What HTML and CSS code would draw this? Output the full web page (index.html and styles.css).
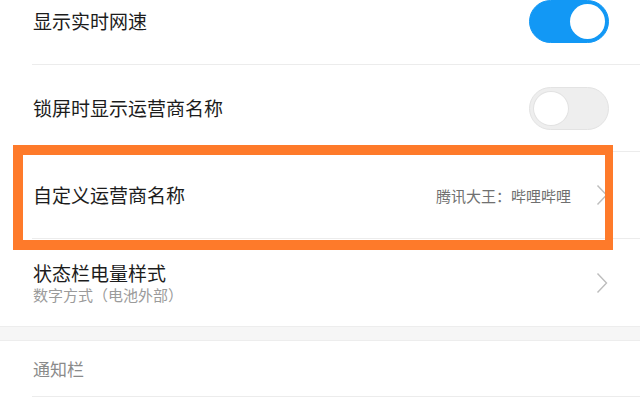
FILE: index.html
```html
<!DOCTYPE html>
<html>
	<head>
		<meta charset="UTF-8">
		<title>状态栏</title>
		<link rel="stylesheet" href="styles.css">
	</head>
	<body>
		<div class="settings">
			<div class="item first">
				<span class="title">显示实时网速</span>
				<span class="switch on"><i></i></span>
			</div>
			<div class="item">
				<span class="title">锁屏时显示运营商名称</span>
				<span class="switch"><i></i></span>
			</div>
			<div class="item">
				<span class="title">自定义运营商名称</span>
				<span class="value">腾讯大王：哔哩哔哩</span>
				<svg class="arrow" viewBox="0 0 12 22" width="12" height="22"><path d="M1.5 1.5 L10.5 11 L1.5 20.5" /></svg>
			</div>
			<div class="item last">
				<div class="text">
					<span class="title">状态栏电量样式</span>
					<span class="sub">数字方式（电池外部）</span>
				</div>
				<svg class="arrow" viewBox="0 0 12 22" width="12" height="22"><path d="M1.5 1.5 L10.5 11 L1.5 20.5" /></svg>
			</div>
			<div class="gap"></div>
			<div class="group-title">通知栏</div>
		</div>
		<div class="mark"></div>
	</body>
</html>
```

FILE: styles.css
```css
* {
	margin: 0;
	padding: 0;
	box-sizing: border-box;
}
html, body {
	width: 640px;
	height: 400px;
	overflow: hidden;
	background: #fff;
}
body {
	font-family: "Noto Sans CJK SC", "Noto Sans", sans-serif;
	position: relative;
}
.settings {
	margin-top: -22px;
}
.item {
	display: flex;
	align-items: center;
	height: 87px;
	margin-left: 32px;
	padding: 0 31px 0 1px;
	border-bottom: 1px solid #ececec;
}
.item.last {
	height: 87px;
	border-bottom: none;
}
.title {
	flex: 1;
	font-size: 19px;
	color: #1c1c1c;
	line-height: 24px;
}
.text {
	flex: 1;
	display: flex;
	flex-direction: column;
}
.sub {
	font-size: 15px;
	line-height: 20px;
	color: #9b9b9b;
}
.value {
	font-size: 15px;
	color: #707070;
	margin-right: 25px;
}
.arrow {
	fill: none;
	stroke: #bdbdbd;
	stroke-width: 1.4;
	margin-right: 1px;
}
.switch {
	width: 80px;
	height: 43px;
	border-radius: 22px;
	background: #eeeeee;
	border: 1px solid #e3e3e3;
	padding: 3px;
	display: flex;
}
.switch i {
	width: 36px;
	height: 35px;
	border-radius: 50%;
	background: #fff;
	border: 1px solid #e2e2e2;
}
.switch.on {
	background: #1298f5;
	border-color: #1298f5;
	justify-content: flex-end;
}
.switch.on i {
	border: none;
	width: 35px;
}
.gap {
	height: 15px;
	background: #f6f6f6;
	border-top: 1px solid #ededed;
	border-bottom: 1px solid #ededed;
}
.group-title {
	height: 56px;
	margin-left: 32px;
	padding-left: 1px;
	display: flex;
	align-items: center;
	font-size: 17px;
	color: #8a8a8a;
	border-bottom: 1px solid #ececec;
}
.mark {
	position: absolute;
	left: 13px;
	top: 145px;
	width: 600px;
	height: 105px;
	border: 10px solid #fe7a2a;
	border-right-width: 8px;
}
```
